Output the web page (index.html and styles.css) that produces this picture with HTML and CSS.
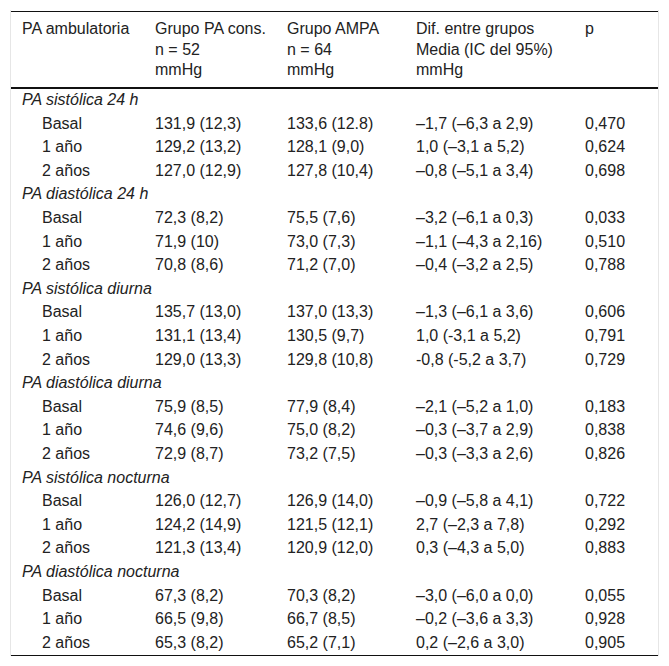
FILE: index.html
```html
<!DOCTYPE html>
<html lang="es">
<head>
<meta charset="utf-8">
<title>PA ambulatoria</title>
<link rel="stylesheet" href="styles.css">
</head>
<body>
<div class="wrap">
<table class="data">
<colgroup>
<col class="c1"><col class="c2"><col class="c3"><col class="c4"><col class="c5">
</colgroup>
<thead>
<tr>
<th>PA ambulatoria</th>
<th>Grupo PA cons.<br>n = 52<br>mmHg</th>
<th>Grupo AMPA<br>n = 64<br>mmHg</th>
<th>Dif. entre grupos<br>Media (IC del 95%)<br>mmHg</th>
<th>p</th>
</tr>
</thead>
<tbody>
<tr class="grp"><td colspan="5">PA sistólica 24 h</td></tr>
<tr><td class="lbl">Basal</td><td>131,9 (12,3)</td><td>133,6 (12.8)</td><td>–1,7 (–6,3 a 2,9)</td><td>0,470</td></tr>
<tr><td class="lbl">1 año</td><td>129,2 (13,2)</td><td>128,1 (9,0)</td><td>1,0 (–3,1 a 5,2)</td><td>0,624</td></tr>
<tr><td class="lbl">2 años</td><td>127,0 (12,9)</td><td>127,8 (10,4)</td><td>–0,8 (–5,1 a 3,4)</td><td>0,698</td></tr>
<tr class="grp"><td colspan="5">PA diastólica 24 h</td></tr>
<tr><td class="lbl">Basal</td><td>72,3 (8,2)</td><td>75,5 (7,6)</td><td>–3,2 (–6,1 a 0,3)</td><td>0,033</td></tr>
<tr><td class="lbl">1 año</td><td>71,9 (10)</td><td>73,0 (7,3)</td><td>–1,1 (–4,3 a 2,16)</td><td>0,510</td></tr>
<tr><td class="lbl">2 años</td><td>70,8 (8,6)</td><td>71,2 (7,0)</td><td>–0,4 (–3,2 a 2,5)</td><td>0,788</td></tr>
<tr class="grp"><td colspan="5">PA sistólica diurna</td></tr>
<tr><td class="lbl">Basal</td><td>135,7 (13,0)</td><td>137,0 (13,3)</td><td>–1,3 (–6,1 a 3,6)</td><td>0,606</td></tr>
<tr><td class="lbl">1 año</td><td>131,1 (13,4)</td><td>130,5 (9,7)</td><td>1,0 (-3,1 a 5,2)</td><td>0,791</td></tr>
<tr><td class="lbl">2 años</td><td>129,0 (13,3)</td><td>129,8 (10,8)</td><td>-0,8 (-5,2 a 3,7)</td><td>0,729</td></tr>
<tr class="grp"><td colspan="5">PA diastólica diurna</td></tr>
<tr><td class="lbl">Basal</td><td>75,9 (8,5)</td><td>77,9 (8,4)</td><td>–2,1 (–5,2 a 1,0)</td><td>0,183</td></tr>
<tr><td class="lbl">1 año</td><td>74,6 (9,6)</td><td>75,0 (8,2)</td><td>–0,3 (–3,7 a 2,9)</td><td>0,838</td></tr>
<tr><td class="lbl">2 años</td><td>72,9 (8,7)</td><td>73,2 (7,5)</td><td>–0,3 (–3,3 a 2,6)</td><td>0,826</td></tr>
<tr class="grp"><td colspan="5">PA sistólica nocturna</td></tr>
<tr><td class="lbl">Basal</td><td>126,0 (12,7)</td><td>126,9 (14,0)</td><td>–0,9 (–5,8 a 4,1)</td><td>0,722</td></tr>
<tr><td class="lbl">1 año</td><td>124,2 (14,9)</td><td>121,5 (12,1)</td><td>2,7 (–2,3 a 7,8)</td><td>0,292</td></tr>
<tr><td class="lbl">2 años</td><td>121,3 (13,4)</td><td>120,9 (12,0)</td><td>0,3 (–4,3 a 5,0)</td><td>0,883</td></tr>
<tr class="grp"><td colspan="5">PA diastólica nocturna</td></tr>
<tr><td class="lbl">Basal</td><td>67,3 (8,2)</td><td>70,3 (8,2)</td><td>–3,0 (–6,0 a 0,0)</td><td>0,055</td></tr>
<tr><td class="lbl">1 año</td><td>66,5 (9,8)</td><td>66,7 (8,5)</td><td>–0,2 (–3,6 a 3,3)</td><td>0,928</td></tr>
<tr><td class="lbl">2 años</td><td>65,3 (8,2)</td><td>65,2 (7,1)</td><td>0,2 (–2,6 a 3,0)</td><td>0,905</td></tr>
</tbody>
</table>
</div>
</body>
</html>
```

FILE: styles.css
```css
html, body {
  margin: 0;
  padding: 0;
  background: #ffffff;
}

body {
  font-family: "Liberation Sans", Arial, sans-serif;
  font-size: 16px;
  color: #222222;
}

.wrap {
  margin: 10px 10px 0 10px;
  padding-top: 1px;
  border-left: 1px solid #e6e6e6;
  border-right: 1px solid #e6e6e6;
}

.data {
  width: 100%;
  table-layout: fixed;
  border-collapse: collapse;
  border-top: 1px solid #111;
  border-bottom: 1px solid #111;
}

.c1 { width: 133px; }
.c2 { width: 132px; }
.c3 { width: 129px; }
.c4 { width: 169px; }
.c5 { width: 84px; }

.data th {
  font-weight: normal;
  text-align: left;
  vertical-align: top;
  line-height: 20.5px;
  padding: 7px 11px 6px 11px;
  border-bottom: 2px solid #111;
  white-space: nowrap;
}

.data td {
  text-align: left;
  line-height: 20.5px;
  padding: 1.55px 11px;
  white-space: nowrap;
}

.data .grp td {
  font-style: italic;
}

.data td.lbl {
  padding-left: 31px;
}
```
